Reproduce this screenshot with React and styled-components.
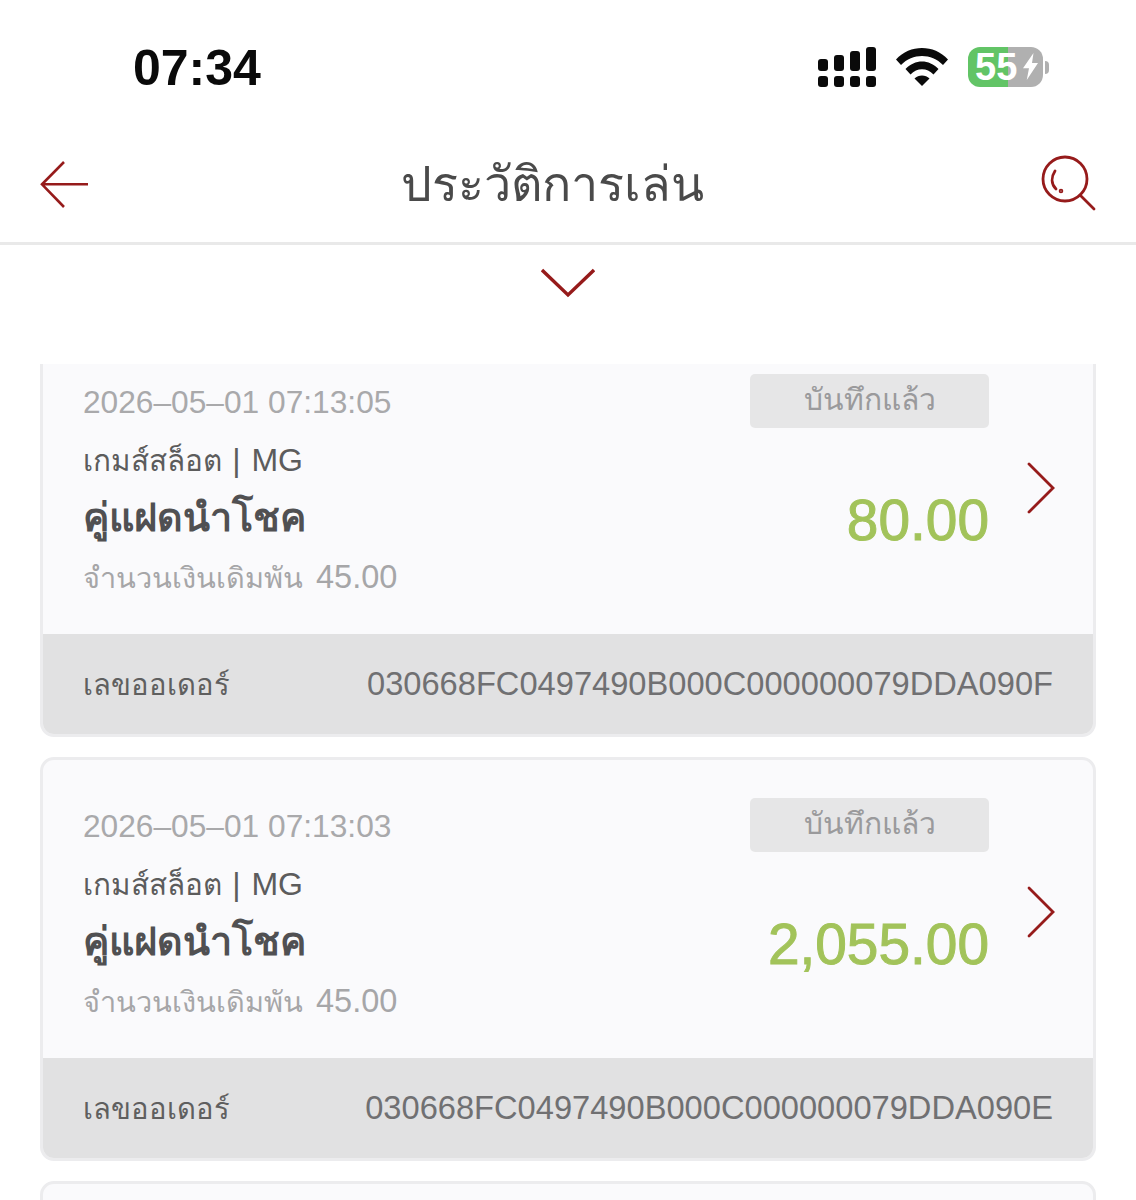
import React from 'react';
import styled, { createGlobalStyle } from 'styled-components';

const RED = '#961b1b';

const GlobalStyle = createGlobalStyle`
  html, body {
    margin: 0;
    padding: 0;
    background: #fff;
    font-family: 'Liberation Sans', 'Noto Sans', 'DejaVu Sans', sans-serif;
  }
`;

const Page = styled.div`
  width: 1136px;
  height: 1200px;
  overflow: hidden;
  background: #fff;
`;

const StatusBar = styled.div`
  height: 130px;
  display: flex;
  align-items: flex-start;
  justify-content: space-between;
  padding: 37px 87px 0 133px;
  box-sizing: border-box;
`;

const Clock = styled.span`
  font-size: 50px;
  line-height: 62px;
  font-weight: 700;
  color: #0a0a0a;
`;

const StatusIcons = styled.div`
  display: flex;
  align-items: center;
  gap: 20px;
  height: 60px;
`;

const Battery = styled.div`
  position: relative;
  width: 75px;
  height: 40px;
  border-radius: 12px;
  background: linear-gradient(90deg, #62c466 0 54%, #b0b0b0 54% 100%);
  color: #fff;
  font-size: 38px;
  line-height: 40px;
  font-weight: 700;
  padding-left: 7px;
  box-sizing: border-box;
`;

const BatteryWrap = styled.div`
  display: flex;
  align-items: center;
  gap: 2px;
`;

const BatteryCap = styled.div`
  width: 4px;
  height: 13px;
  border-radius: 0 4px 4px 0;
  background: #b0b0b0;
`;

const Bolt = styled.svg`
  position: absolute;
  right: 5px;
  top: 6px;
`;

const Header = styled.header`
  height: 112px;
  border-bottom: 3px solid #e9e9e9;
  display: flex;
  align-items: center;
  justify-content: space-between;
  padding: 0 40px;
`;

const HeaderTitle = styled.h1`
  margin: -6px 25px 0 0;
  font-size: 48.5px;
  font-weight: 400;
  color: #4a4a4a;
`;

const SearchSvg = styled.svg`
  overflow: visible;
`;

const FilterToggle = styled.div`
  height: 119px;
  display: flex;
  justify-content: center;
  padding-top: 23px;
  box-sizing: border-box;
`;

const List = styled.div`
  height: 836px;
  overflow: hidden;
  padding: 0 40px;
  display: flex;
  flex-direction: column;
  gap: 20px;
`;

const Card = styled.article`
  flex: none;
  box-sizing: border-box;
  height: 404px;
  border: 3px solid #ececee;
  border-radius: 14px;
  background: #fafafc;
  overflow: hidden;
  display: flex;
  flex-direction: column;
  &:first-child {
    margin-top: -31px;
  }
`;

const CardBody = styled.div`
  flex: 1;
  display: flex;
  align-items: center;
  padding: 0 38px 0 40px;
`;

const Info = styled.div`
  flex: 1;
  display: flex;
  flex-direction: column;
  margin-top: 10px;
`;

const DateText = styled.div`
  font-size: 31.7px;
  line-height: 50px;
  color: #a9a9ab;
`;

const GameLine = styled.div`
  font-size: 29.7px;
  line-height: 50px;
  margin-top: 8px;
  color: #5c5c5c;
`;

const Provider = styled.span`
  font-size: 32px;
  margin-left: 2px;
  word-spacing: 2px;
`;

const GameName = styled.div`
  font-size: 39.5px;
  line-height: 58px;
  margin-top: 2px;
  font-weight: 700;
  color: #505052;
`;

const BetLine = styled.div`
  font-size: 28.9px;
  line-height: 50px;
  margin-top: 6px;
  color: #a6a6a8;
`;

const BetValue = styled.span`
  font-size: 32.5px;
  margin-left: 4px;
`;

const Side = styled.div`
  display: flex;
  flex-direction: column;
  align-items: flex-end;
  justify-content: space-between;
  height: 232px;
  margin-top: 9px;
`;

const Badge = styled.div`
  width: 239px;
  height: 54px;
  border-radius: 5px;
  background: #e6e6e7;
  color: #9a9a9c;
  font-size: 30px;
  line-height: 52px;
  text-align: center;
`;

const Amount = styled.div`
  font-size: 56.8px;
  line-height: 64px;
  color: #a2c35a;
  font-weight: 500;
  margin-bottom: 53px;
  -webkit-text-stroke: 1px #a2c35a;
`;

const Chevron = styled.svg`
  flex: none;
  margin: 6px 0 0 38px;
`;

const CardFooter = styled.div`
  height: 100px;
  flex: none;
  background: #e1e1e2;
  display: flex;
  align-items: center;
  justify-content: space-between;
  padding: 0 40px;
  color: #5f5f5f;
`;

const OrderLabel = styled.span`
  font-size: 29.2px;
`;

const OrderNumber = styled.span`
  font-size: 32.65px;
  color: #707072;
`;

const CARDS = [
  {
    date: '2026–05–01 07:13:05',
    amount: '80.00',
    order: '030668FC0497490B000C000000079DDA090F',
  },
  {
    date: '2026–05–01 07:13:03',
    amount: '2,055.00',
    order: '030668FC0497490B000C000000079DDA090E',
  },
  { date: '', amount: '', order: '' },
];

const SignalIcon = () => (
  <svg width="58" height="40" viewBox="0 0 58 40" fill="#0a0a0a">
    <rect x="0" y="29" width="10" height="11" rx="3" />
    <rect x="16" y="29" width="10" height="11" rx="3" />
    <rect x="32" y="29" width="10" height="11" rx="3" />
    <rect x="48" y="29" width="10" height="11" rx="3" />
    <rect x="0" y="12" width="10" height="12" rx="3" />
    <rect x="16" y="8" width="10" height="16" rx="3" />
    <rect x="32" y="4" width="10" height="20" rx="3" />
    <rect x="48" y="0" width="10" height="24" rx="3" />
  </svg>
);

const WifiIcon = () => (
  <svg width="52" height="38" viewBox="0 0 52 38" fill="#0a0a0a">
    <path d="M0 11.5C14 -3.8 38 -3.8 52 11.5L47 17C35.500 5 16.500 5 5 17Z" />
    <path d="M9.500 21C19 11 33 11 42.500 21L37.500 26.500C31 19.500 21 19.500 14.500 26.500Z" />
    <path d="M18.500 30.500C22.500 26.500 29.500 26.500 33.500 30.500L26 38Z" />
  </svg>
);

const BackIcon = () => (
  <svg width="50" height="50" viewBox="0 0 50 50" fill="none" stroke={RED} strokeWidth="2.600">
    <path d="M24 1 L2 23.300 L24 46 M2 23.300 H48" />
  </svg>
);

const SearchIcon = () => (
  <SearchSvg width="56" height="56" viewBox="0 0 56 56" fill="none" stroke={RED} strokeWidth="2.800" strokeLinecap="round">
    <circle cx="25" cy="21" r="22" />
    <path d="M40 37 L54 51" />
    <path d="M15 13 C11 19 11 26 16 31" />
    <circle cx="21" cy="33" r="0.900" />
  </SearchSvg>
);

const ChevronDown = () => (
  <svg width="54" height="30" viewBox="0 0 54 30" fill="none" stroke={RED} strokeWidth="3.400">
    <path d="M1 2 L27 27 L53 2" />
  </svg>
);

const HistoryCard = ({ date, amount, order }) => (
  <Card>
    {date && (
      <>
        <CardBody>
          <Info>
            <DateText>{date}</DateText>
            <GameLine>
              เกมส์สล็อต <Provider>| MG</Provider>
            </GameLine>
            <GameName>คู่แฝดนำโชค</GameName>
            <BetLine>
              จำนวนเงินเดิมพัน<BetValue> 45.00</BetValue>
            </BetLine>
          </Info>
          <Side>
            <Badge>บันทึกแล้ว</Badge>
            <Amount>{amount}</Amount>
          </Side>
          <Chevron width="28" height="52" viewBox="0 0 28 52" fill="none" stroke={RED} strokeWidth="2.800" strokeLinecap="round">
            <path d="M2 2 L26 26 L2 50" />
          </Chevron>
        </CardBody>
        <CardFooter>
          <OrderLabel>เลขออเดอร์</OrderLabel>
          <OrderNumber>{order}</OrderNumber>
        </CardFooter>
      </>
    )}
  </Card>
);

const App = () => (
  <Page>
    <GlobalStyle />
    <StatusBar>
      <Clock>07:34</Clock>
      <StatusIcons>
        <SignalIcon />
        <WifiIcon />
        <BatteryWrap>
          <Battery>
            55
            <Bolt width="15" height="27" viewBox="0 0 20 30" preserveAspectRatio="none" fill="#fff">
              <path d="M14 0 L0 17 H8 L5 30 L20 11 H12 Z" />
            </Bolt>
          </Battery>
          <BatteryCap />
        </BatteryWrap>
      </StatusIcons>
    </StatusBar>
    <Header>
      <BackIcon />
      <HeaderTitle>ประวัติการเล่น</HeaderTitle>
      <SearchIcon />
    </Header>
    <FilterToggle>
      <ChevronDown />
    </FilterToggle>
    <List>
      {CARDS.map((card, i) => (
        <HistoryCard key={i} {...card} />
      ))}
    </List>
  </Page>
);

export default App;
